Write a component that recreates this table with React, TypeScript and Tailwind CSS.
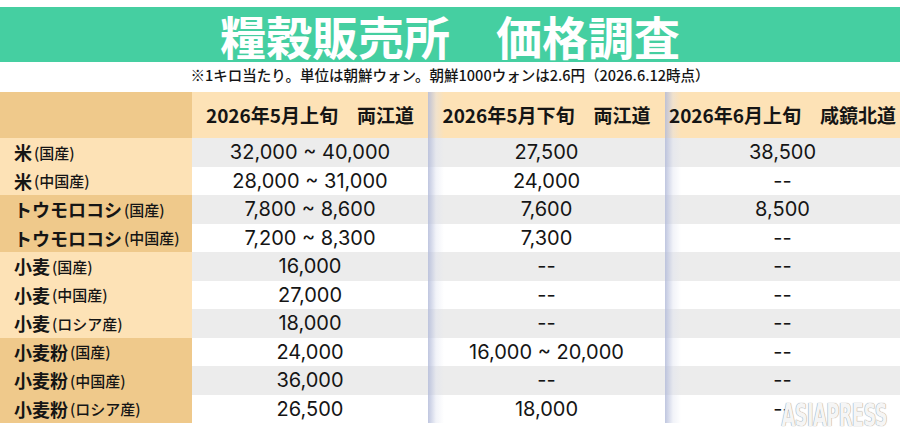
import * as React from "react"

type Row = {
  name: string
  origin: string
  dark: boolean
  values: [string, string, string]
}

const rows: Row[] = [
  { name: "米", origin: "(国産)", dark: false, values: ["32,000 ~ 40,000", "27,500", "38,500"] },
  { name: "米", origin: "(中国産)", dark: false, values: ["28,000 ~ 31,000", "24,000", "--"] },
  { name: "トウモロコシ", origin: "(国産)", dark: true, values: ["7,800 ~ 8,600", "7,600", "8,500"] },
  { name: "トウモロコシ", origin: "(中国産)", dark: true, values: ["7,200 ~ 8,300", "7,300", "--"] },
  { name: "小麦", origin: "(国産)", dark: false, values: ["16,000", "--", "--"] },
  { name: "小麦", origin: "(中国産)", dark: false, values: ["27,000", "--", "--"] },
  { name: "小麦", origin: "(ロシア産)", dark: false, values: ["18,000", "--", "--"] },
  { name: "小麦粉", origin: "(国産)", dark: true, values: ["24,000", "16,000 ~ 20,000", "--"] },
  { name: "小麦粉", origin: "(中国産)", dark: true, values: ["36,000", "--", "--"] },
  { name: "小麦粉", origin: "(ロシア産)", dark: true, values: ["26,500", "18,000", "--"] },
]

const columns = [
  { date: "2026年5月上旬", region: "両江道" },
  { date: "2026年5月下旬", region: "両江道" },
  { date: "2026年6月上旬", region: "咸鏡北道" },
]

const jp = "font-['Noto_Sans_CJK_JP',sans-serif]"
const num = "font-['Inter','Noto_Sans',sans-serif]"

function ColumnShadow() {
  return (
    <div className="pointer-events-none absolute inset-y-0 left-0 w-[16px] bg-gradient-to-r from-[#b4bcda]/85 via-[#dde1ef]/40 to-transparent" />
  )
}

export default function App() {
  return (
    <div className={`w-[900px] h-[438px] bg-white text-[#151515] ${jp} relative overflow-hidden`}>
      <div className="h-[7px]" />
      <div className="h-[55px] bg-[#45cfa1] flex items-center justify-center">
        <h1 className="text-white text-[46px] font-bold leading-none">
          糧穀販売所　価格調査
        </h1>
      </div>
      <p className="h-[30px] flex items-center justify-center text-[14.5px] font-medium leading-none pb-[4px]">
        ※1キロ当たり。単位は朝鮮ウォン。朝鮮1000ウォンは2.6円（2026.6.12時点）
      </p>

      <div className="grid grid-cols-[192px_236px_237px_235px]">
        {/* header */}
        <div className="h-[46px] bg-[#efc98b]" />
        {columns.map((c, i) => (
          <div
            key={i}
            className="relative h-[46px] bg-[#fde2b6] flex items-center justify-center text-[19px] font-bold whitespace-pre"
          >
            {i > 0 && <ColumnShadow />}
            <span className="relative">
              {c.date}　{c.region}
            </span>
          </div>
        ))}

        {/* body */}
        {rows.map((r, ri) => (
          <React.Fragment key={ri}>
            <div
              className={`h-[28.5px] flex items-center pl-[14px] ${
                r.dark ? "bg-[#efc98b]" : "bg-[#fde2b6]"
              }`}
            >
              <span className="text-[18px] font-bold leading-none">{r.name}</span>
              <span className="text-[15px] font-medium leading-none ml-[2px]">{r.origin}</span>
            </div>
            {r.values.map((v, vi) => (
              <div
                key={vi}
                className={`relative h-[28.5px] flex items-center justify-center ${num} text-[20px] leading-none ${
                  ri % 2 === 0 ? "bg-[#ececec]" : "bg-white"
                }`}
              >
                {vi > 0 && <ColumnShadow />}
                <span className="relative">{v}</span>
              </div>
            ))}
          </React.Fragment>
        ))}
      </div>

      {/* watermark */}
      <span className="absolute right-[13px] top-[399px] origin-top-right scale-x-[0.62] text-[32px] font-bold leading-none text-white/90 font-['DejaVu_Sans_Condensed','DejaVu_Sans',sans-serif] [text-shadow:0_0_1px_#9a9a9a,0_0_1px_#9a9a9a] tracking-[-1px] whitespace-nowrap">
        ASIAPRESS
      </span>
    </div>
  )
}
